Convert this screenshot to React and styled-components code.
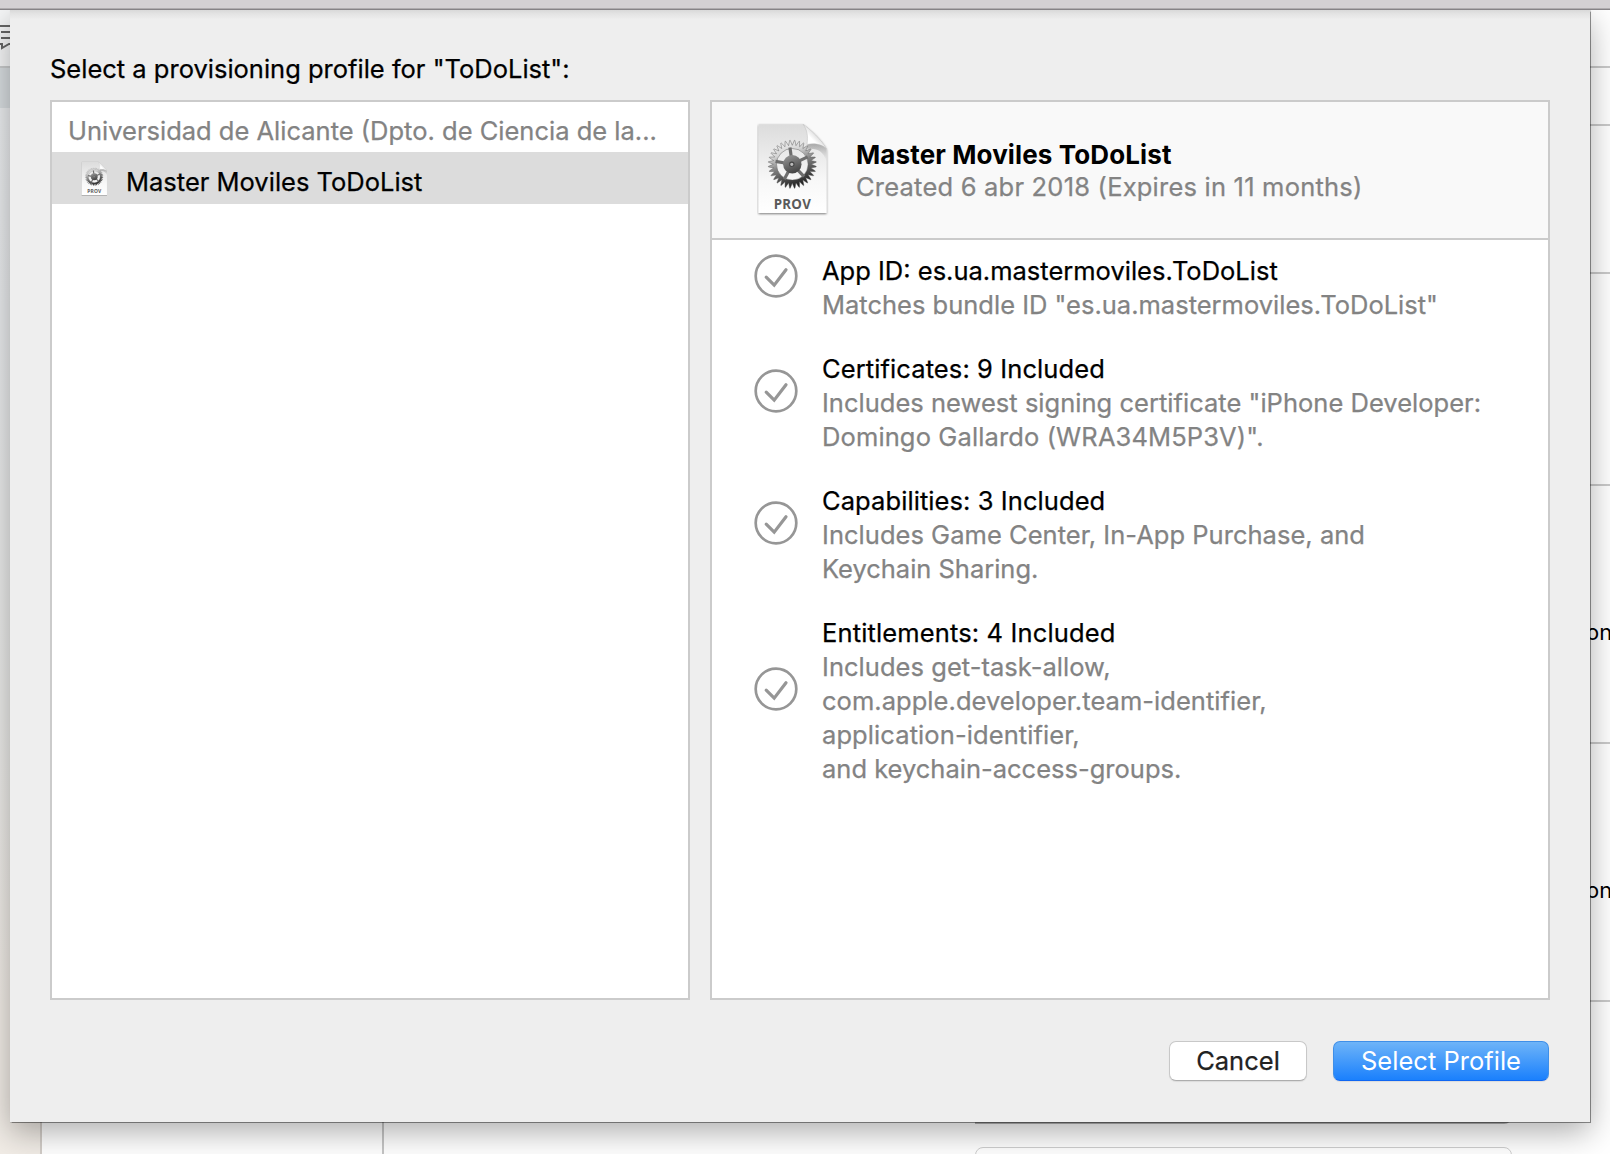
import React from "react";
import styled, { createGlobalStyle } from "styled-components";

const GlobalStyle = createGlobalStyle`
  * { box-sizing: border-box; }
  body {
    margin: 0;
    background: #fff;
    overflow: hidden;
    font-family: Inter, "Liberation Sans", sans-serif;
  }
`;

const Desktop = styled.div`
  position: relative;
  display: grid;
  grid-template-rows: 10px 1fr;
  width: 1610px;
  height: 1154px;
  overflow: hidden;
`;

const TitleBar = styled.div`
  position: relative;
  z-index: 2;
  background: #d3d0d3;
  border-bottom: 1px solid #858286;
  box-shadow: inset 0 -1px 0 #aeabae;
`;

const Backdrop = styled.div`
  display: grid;
  grid-template-columns: 42px 342px 1fr;
`;

const Sidebar = styled.div`
  display: flex;
  flex-direction: column;
  background: linear-gradient(#eceef0 0, #e9ebed 300px, #ebebe9 700px, #f1ece6 1000px);
  border-right: 2px solid #d2cdc8;
`;

const SidebarToolbar = styled.div`
  height: 58px;
  padding-top: 14px;
  border-bottom: 2px solid #c9cbcc;
  background: #f6f7f8;
`;

const SidebarSelection = styled.div`
  height: 40px;
  background: #d8dde0;
`;

const Navigator = styled.div`
  border-right: 2px solid #c6c6c6;
`;

const Editor = styled.div`
  display: flex;
  flex-direction: column;
`;

const EditorSection = styled.div`
  display: flex;
  align-items: center;
  flex: none;
  height: ${(p) => p.$height}px;
  border-bottom: 2px solid #cacaca;
  overflow: hidden;
`;

const SectionText = styled.span`
  margin-left: 1202px;
  padding-top: ${(p) => p.$top}px;
  font-size: 22px;
  line-height: 28px;
`;

const Fields = styled.div`
  display: flex;
  flex-direction: column;
  gap: 23px;
  width: 537px;
  margin-left: 591px;
`;

const Popup = styled.div`
  flex: none;
  height: 122px;
  border: 2px solid #b4b4b4;
  border-radius: 0 0 8px 0;
`;

const Field = styled.div`
  flex: none;
  height: 40px;
  border: 1px solid #cfcfcf;
  border-radius: 8px;
  background: #fff;
`;

const Sheet = styled.section`
  position: absolute;
  z-index: 1;
  top: 10px;
  left: 10px;
  width: 1580px;
  height: 1112px;
  display: flex;
  flex-direction: column;
  padding: 40px 40px 41px;
  background: linear-gradient(#d9d9d9 0, #e4e4e4 4px, #ebebeb 8px, #eee 9px);
  box-shadow: 0 0 1px 0.5px rgba(0, 0, 0, 0.42), 0 10px 30px rgba(0, 0, 0, 0.32);
`;

const Line = styled.span`
  display: block;
  font-size: ${(p) => (p.$bold ? 26 : 25.5)}px;
  font-weight: ${(p) => (p.$bold ? 700 : 400)};
  line-height: 34px;
  letter-spacing: ${(p) => p.$tracking || 0}px;
  color: ${(p) => (p.$muted ? "#838383" : "#000")};
  -webkit-text-stroke: ${(p) => (p.$bold ? 0 : 0.25)}px currentColor;
  white-space: pre;
`;

const Heading = styled.header`
  height: 50px;
  padding-top: 2px;
`;

const Panels = styled.div`
  display: grid;
  grid-template-columns: 640px 840px;
  gap: 20px;
  height: 900px;
`;

const Panel = styled.div`
  display: flex;
  flex-direction: column;
  border: 2px solid #cbcbcb;
  background: #fff;
`;

const GroupRow = styled.div`
  height: 50px;
  padding: 12px 0 0 16px;
`;

const ProfileRow = styled.div`
  display: flex;
  align-items: center;
  gap: 18px;
  height: 52px;
  padding: 7px 0 0 29px;
  background: #dcdcdc;

  svg { margin-top: -6px; }
`;

const ProfileHeader = styled.div`
  display: flex;
  gap: 27px;
  height: 138px;
  padding: 20px 0 0 45px;
  border-bottom: 2px solid #cbcbcb;
  background: #f9f9f9;
`;

const ProfileTitle = styled.div`
  padding-top: 17px;

  ${Line} { line-height: 32px; }
`;

const Details = styled.div`
  display: flex;
  flex-direction: column;
  gap: 30px;
  padding: 14px 0 0 42px;
`;

const Detail = styled.div`
  display: flex;
  align-items: center;
  gap: 24px;
`;

const CheckBadge = styled.svg`
  flex: none;
  width: 44px;
  height: 44px;
  margin-bottom: 24px;
  fill: none;
  stroke: #969696;
`;

const Actions = styled.footer`
  display: flex;
  justify-content: flex-end;
  gap: 26px;
  margin-top: auto;
  padding-right: 1px;
`;

const Button = styled.button`
  width: ${(p) => (p.$primary ? 216 : 138)}px;
  height: 40px;
  padding: 0;
  border: 1px solid ${(p) => (p.$primary ? "#3f8fe8" : "#c8c8c8")};
  border-bottom-color: ${(p) => (p.$primary ? "#0f66f2" : "#adadad")};
  border-radius: 7px;
  background: ${(p) => (p.$primary ? "linear-gradient(#6eb4f8, #1a80fd)" : "#fff")};
  box-shadow: 0 1px 1px rgba(0, 0, 0, 0.08);
  color: ${(p) => (p.$primary ? "#fff" : "#222")};
  font: 400 25.5px/36px Inter, "Liberation Sans", sans-serif;
  letter-spacing: 0.02px;
  -webkit-text-stroke: ${(p) => (p.$primary ? 0 : 0.25)}px currentColor;
`;

const point = (angle, radius) =>
  `${(35.3 + Math.cos(angle) * radius).toFixed(2)} ${(42.3 + Math.sin(angle) * radius).toFixed(2)}`;

const TEETH = 32;
const teethPath =
  Array.from({ length: TEETH }, (_, i) => {
    const start = (i / TEETH) * Math.PI * 2;
    const step = (Math.PI * 2) / TEETH;
    return `${i ? "L" : "M"}${point(start, 19)}L${point(start + step * 0.44, 24)}L${point(start + step * 0.56, 24)}`;
  }).join("") + "Z";
const ringHole = "M51.1 42.3A15.8 15.8 0 1 0 19.5 42.3A15.8 15.8 0 1 0 51.1 42.3Z";
const spokes = [-98, -26, 46, 118, 190].map((deg) => (deg * Math.PI) / 180);

function ProvisionIcon({ id, width, height }) {
  const ref = (name) => `url(#${id}-${name})`;
  return (
    <svg width={width} height={height} viewBox="0 0 72 94">
      <defs>
        <linearGradient id={`${id}-page`} x1="0" y1="0" x2="0" y2="1">
          <stop offset="0" stopColor="#dcdcdc" />
          <stop offset=".65" stopColor="#f8f8f8" />
          <stop offset="1" stopColor="#fff" />
        </linearGradient>
        <linearGradient id={`${id}-gear`} gradientUnits="userSpaceOnUse" x1="26" y1="19" x2="43" y2="66">
          <stop offset="0" stopColor="#f0f0f0" />
          <stop offset=".25" stopColor="#d4d4d4" />
          <stop offset=".5" stopColor="#808080" />
          <stop offset="1" stopColor="#141414" />
        </linearGradient>
        <linearGradient id={`${id}-hub`} x1="0" y1="0" x2=".4" y2="1">
          <stop offset="0" stopColor="#9c9c9c" />
          <stop offset="1" stopColor="#484848" />
        </linearGradient>
        <linearGradient id={`${id}-fold`} x1="0" y1="1" x2=".65" y2=".35">
          <stop offset="0" stopColor="#fff" />
          <stop offset=".6" stopColor="#fff" />
          <stop offset="1" stopColor="#d0d0d0" />
        </linearGradient>
        <linearGradient id={`${id}-shade`} x1="0" y1="0" x2="0" y2="1">
          <stop offset="0" stopColor="#777" stopOpacity=".6" />
          <stop offset="1" stopColor="#999" stopOpacity="0" />
        </linearGradient>
        <filter id={`${id}-drop`} x="-10%" y="-10%" width="120%" height="120%">
          <feDropShadow dx="0" dy="1" stdDeviation="1.1" floodOpacity=".5" />
        </filter>
      </defs>
      <path d="M1.5 2.3H46C52 6 67 20 69.5 27V91H1.5Z" fill={ref("page")} filter={ref("drop")} />
      <path d="M51 21C58 20 66 21 69.5 27V39C66 29 60 26 50 27Z" fill={ref("shade")} />
      <path d="M46 2.3C50.5 8 51 14 50 22.5C57 21 65 22 69.5 27C66 19 52 6 46 2.3Z" fill={ref("fold")} stroke="#bbb" strokeWidth=".5" />
      <path d={teethPath + ringHole} fill={ref("gear")} fillRule="evenodd" stroke="#555" strokeOpacity=".75" strokeWidth=".6" />
      {spokes.map((angle) => (
        <path key={angle} d={`M${point(angle, 6)}L${point(angle, 17)}`} stroke="#6e6e6e" strokeWidth="3.2" />
      ))}
      <circle cx="35.3" cy="42.3" r="9.2" fill={ref("hub")} />
      <circle cx="34.8" cy="42.3" r="2.2" fill="#bbb" stroke="#444" strokeWidth="1.1" />
      <text x="35.3" y="86.5" textAnchor="middle" textLength="37" fill="#5a5a5a" fontFamily="Open Sans, sans-serif" fontSize="13.3" fontWeight="700">
        PROV
      </text>
    </svg>
  );
}

const details = [
  {
    title: ["App ID: es.ua.mastermoviles.ToDoList", 0],
    lines: [['Matches bundle ID "es.ua.mastermoviles.ToDoList"', 0]],
  },
  {
    title: ["Certificates: 9 Included", 0.1],
    lines: [
      ['Includes newest signing certificate "iPhone Developer:', 0.02],
      ['Domingo Gallardo (WRA34M5P3V)".', 0.12],
    ],
  },
  {
    title: ["Capabilities: 3 Included", 0.08],
    lines: [
      ["Includes Game Center, In-App Purchase, and", 0.03],
      ["Keychain Sharing.", -0.02],
    ],
  },
  {
    title: ["Entitlements: 4 Included", 0.14],
    lines: [
      ["Includes get-task-allow,", 0.04],
      ["com.apple.developer.team-identifier,", 0.04],
      ["application-identifier,", 0.09],
      ["and keychain-access-groups.", 0],
    ],
  },
];

export default function App() {
  return (
    <Desktop>
      <GlobalStyle />
      <TitleBar />
      <Backdrop>
        <Sidebar>
          <SidebarToolbar>
            <svg width="24" height="28" viewBox="0 0 24 28" fill="none" stroke="#666" strokeWidth="2">
              <path d="M0 2H22M1 8H18M1 14H18M0 20H2V24L9 20H22" />
            </svg>
          </SidebarToolbar>
          <SidebarSelection />
        </Sidebar>
        <Navigator />
        <Editor>
          <EditorSection $height={58} />
          <EditorSection $height={58} />
          <EditorSection $height={148} />
          <EditorSection $height={212} />
          <EditorSection $height={258}>
            <SectionText $top={36}>on</SectionText>
          </EditorSection>
          <EditorSection $height={258}>
            <SectionText $top={36}>on</SectionText>
          </EditorSection>
          <Fields>
            <Popup />
            <Field />
          </Fields>
        </Editor>
      </Backdrop>

      <Sheet>
        <Heading>
          <Line>Select a provisioning profile for "ToDoList":</Line>
        </Heading>
        <Panels>
          <Panel>
            <GroupRow>
              <Line $muted>Universidad de Alicante (Dpto. de Ciencia de la...</Line>
            </GroupRow>
            <ProfileRow>
              <ProvisionIcon id="small" width={27} height={35} />
              <Line>Master Moviles ToDoList</Line>
            </ProfileRow>
          </Panel>
          <Panel>
            <ProfileHeader>
              <ProvisionIcon id="large" width={72} height={94} />
              <ProfileTitle>
                <Line $bold $tracking={0.12}>Master Moviles ToDoList</Line>
                <Line $muted $tracking={0.21}>Created 6 abr 2018 (Expires in 11 months)</Line>
              </ProfileTitle>
            </ProfileHeader>
            <Details>
              {details.map(({ title, lines }) => (
                <Detail key={title[0]}>
                  <CheckBadge viewBox="0 0 44 44">
                    <circle cx="22" cy="22" r="20.3" strokeWidth="2.7" />
                    <path d="M12.2 23.2L20.2 31.2L32 15.8" strokeWidth="3.2" strokeLinecap="round" />
                  </CheckBadge>
                  <div>
                    <Line $tracking={title[1]}>{title[0]}</Line>
                    {lines.map(([text, tracking]) => (
                      <Line key={text} $muted $tracking={tracking}>{text}</Line>
                    ))}
                  </div>
                </Detail>
              ))}
            </Details>
          </Panel>
        </Panels>
        <Actions>
          <Button>Cancel</Button>
          <Button $primary>Select Profile</Button>
        </Actions>
      </Sheet>
    </Desktop>
  );
}
